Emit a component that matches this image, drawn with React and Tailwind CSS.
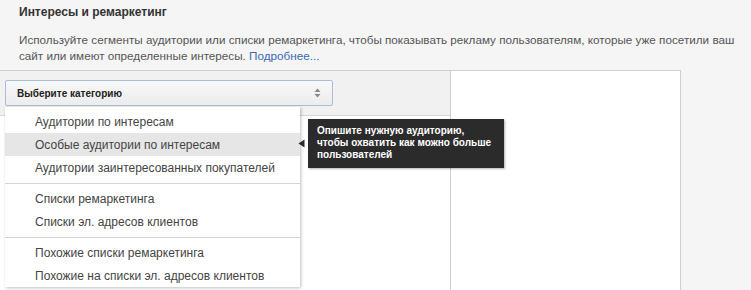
import React from "react";

const groups = [
  ["Аудитории по интересам", "Особые аудитории по интересам", "Аудитории заинтересованных покупателей"],
  ["Списки ремаркетинга", "Списки эл. адресов клиентов"],
  ["Похожие списки ремаркетинга", "Похожие на списки эл. адресов клиентов"],
];

function SortArrows() {
  return (
    <svg width="7" height="10" viewBox="0 0 7 10" className="text-[#888]">
      <path d="M3.5 0.5 L6.5 4 L0.5 4 Z" fill="currentColor" />
      <path d="M3.5 9.5 L6.5 6 L0.5 6 Z" fill="currentColor" />
    </svg>
  );
}

export default function App() {
  return (
    <div className="relative w-[751px] h-[290px] overflow-hidden bg-[#f5f5f5] font-['Liberation_Sans',Arial,sans-serif]">
      <div className="pl-[19px] pt-[4px]">
        <h2 className="text-[12px] leading-[16px] font-bold text-[#333]">Интересы и ремаркетинг</h2>
        <p className="mt-[12px] text-[11.7px] leading-[16px] text-[#555] whitespace-nowrap">
          Используйте сегменты аудитории или списки ремаркетинга, чтобы показывать рекламу пользователям, которые уже посетили ваш
          <br />
          сайт или имеют определенные интересы. <span className="text-[#3b69b6]">Подробнее...</span>
        </p>
      </div>

      <div className="mt-[6px] flex w-[681px] h-[230px] border-t border-r border-[#cfcfcf]">
        {/* left column */}
        <div className="relative w-[450px] flex flex-col">
          <div className="h-[45px] bg-[#f1f1f1] border-b border-[#d6d6d6] pt-[9px] pl-[5px]">
            <div className="w-[328px] h-[26px] flex items-center justify-between pl-[11px] pr-[11px] rounded-[2px] border border-[#a9bcd9] bg-gradient-to-b from-[#f8f8f8] to-[#ececec]">
              <span className="text-[10px] font-bold text-[#222]">Выберите категорию</span>
              <SortArrows />
            </div>
          </div>
          <div className="flex-1 bg-white" />

          {/* dropdown menu */}
          <div className="absolute left-[5px] top-[36px] w-[295px] bg-white pt-[3px] shadow-[1px_1px_3px_rgba(0,0,0,0.25)]">
            {groups.map((items, gi) => (
              <div key={gi}>
                {gi > 0 && <div className="mt-[4px] mb-[3px] h-px bg-[#d4d4d4]" />}
                {items.map((label) => (
                  <div
                    key={label}
                    className={`h-[23px] flex items-center pl-[30px] text-[12px] text-[#444] whitespace-nowrap ${
                      label === "Особые аудитории по интересам" ? "bg-[#e6e6e6]" : ""
                    }`}
                  >
                    {label}
                  </div>
                ))}
              </div>
            ))}
          </div>

          {/* small pointer near hovered item */}
          <svg className="absolute left-[298px] top-[68px]" width="7" height="9" viewBox="0 0 7 9">
            <path d="M0.5 4.5 L6.5 0.5 L6.5 8.5 Z" fill="#2b2b2b" />
          </svg>

          {/* tooltip */}
          <div className="absolute left-[308px] top-[48px] w-[196px] h-[49px] bg-[#2b2b2b] pl-[9px] pt-[6px] shadow-[1px_1px_2px_rgba(0,0,0,0.3)]">
            <p className="text-[10px] leading-[12px] font-bold text-white whitespace-nowrap">
              Опишите нужную аудиторию,
              <br />
              чтобы охватить как можно больше
              <br />
              пользователей
            </p>
          </div>
        </div>

        {/* right column */}
        <div className="flex-1 bg-white border-l border-[#cfcfcf]" />
      </div>
    </div>
  );
}
